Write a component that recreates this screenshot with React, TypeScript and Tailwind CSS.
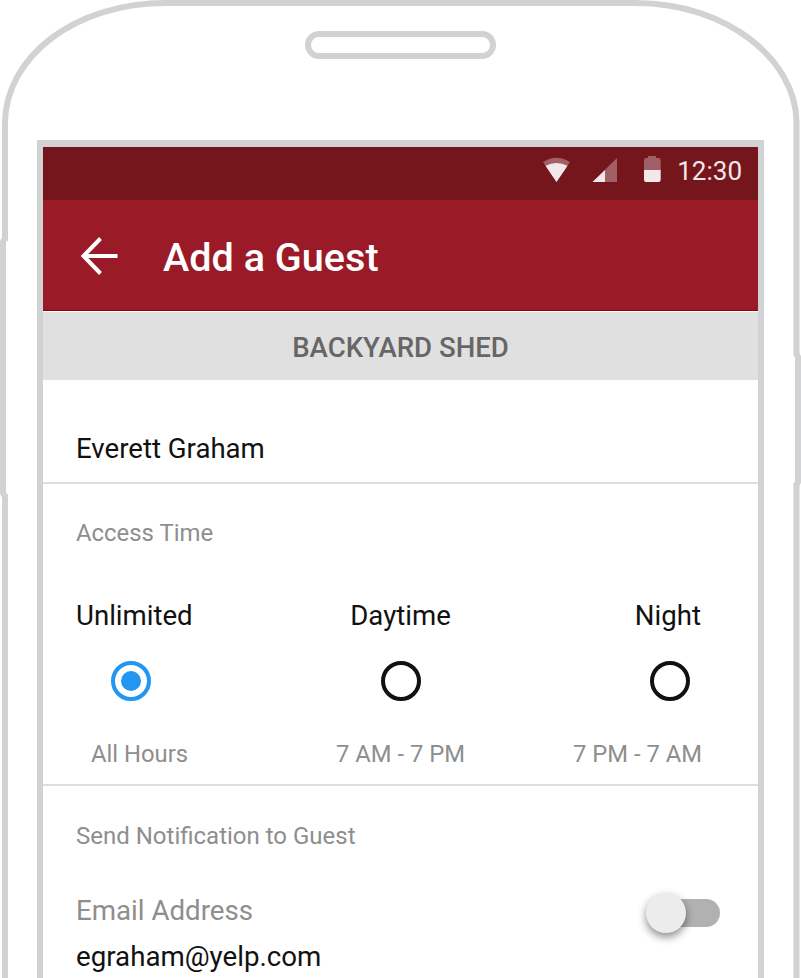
import React from "react";

function PhoneOutline() {
  return (
    <svg
      className="pointer-events-none absolute inset-0"
      width="801"
      height="978"
      viewBox="0 0 801 978"
      fill="none"
      stroke="#d1d2d4"
      strokeWidth="6"
      aria-hidden="true"
    >
      <path d="M5 241V122C6 58 73 3 166 3H636C727 3 796 60 796.5 122V356" />
      <path d="M5 494V990" />
      <path d="M796.5 483V990" />
      <path d="M5 238L3 242V493L5 497" />
      <path d="M796 353L798 357V482L796 486" />
    </svg>
  );
}

function StatusIcons() {
  return (
    <svg className="mr-4 block" width="120" height="30" viewBox="542 155 120 30" aria-hidden="true">
      <path d="M543 162Q556.500 153.500 570 162L556.500 182Z" fill="#a15f66" />
      <path d="M545.500 165.700Q556.500 160.500 567.500 165.700L556.500 182Z" fill="#f2e8e9" />
      <path d="M617 158V182H592.500Z" fill="#a15f66" />
      <path d="M605 170V182H592.500Z" fill="#f2e8e9" />
      <path d="M648 156H656V158H658.500Q660.700 158 660.700 160.200V170H644V160.200Q644 158 646 158H648Z" fill="#a15f66" />
      <path d="M644 170H660.700V180Q660.700 182 658.500 182H646Q644 182 644 180Z" fill="#f2e8e9" />
    </svg>
  );
}

function Radio({ checked = false }: { checked?: boolean }) {
  return (
    <span
      className={
        checked
          ? "flex h-10 w-10 items-center justify-center rounded-full border-4 border-[#2196f3]"
          : "flex h-10 w-10 items-center justify-center rounded-full border-4 border-[#111111]"
      }
    >
      {checked && <span className="h-5 w-5 rounded-full bg-[#2196f3]" />}
    </span>
  );
}

export default function App() {
  return (
    <div className="relative flex h-[978px] w-[801px] flex-col overflow-hidden bg-white font-['Roboto',sans-serif]">
      <PhoneOutline />
      <div className="flex h-[140px] shrink-0 justify-center pt-[31px]">
        <div className="h-7 w-[191px] rounded-full border-[6px] border-[#d1d2d4]" />
      </div>

      <main className="mr-[37px] ml-[37px] flex flex-1 flex-col border-x-[6px] border-t-[7px] border-[#d1d2d4]">
        <div className="flex h-[53px] shrink-0 items-start justify-end bg-[#75151c] pt-2 pr-4">
          <StatusIcons />
          <span className="-ml-px text-[26px] leading-[32px] text-[#f2e8e9]">12:30</span>
        </div>

        <header className="flex h-[111px] shrink-0 items-center border-b border-[#8f000f] bg-[#9a1b27] pl-9">
          <svg className="block" width="40" height="40" viewBox="0 0 40 40" fill="none" stroke="#fff" strokeWidth="4" aria-hidden="true">
            <path d="M38.500 21H5M21.500 3.500L4.500 21L21.500 38.500" />
          </svg>
          <h1 className="ml-11 pt-[5px] text-[39.6px] leading-[48px] font-medium text-white">Add a Guest</h1>
        </header>

        <div className="mt-px flex h-[68px] shrink-0 items-center justify-center bg-[#e0e0e0] pt-[3px] text-[27.6px] leading-8 font-medium text-[#666666]">
          BACKYARD SHED
        </div>

        <section className="h-[104px] shrink-0 border-b-2 border-[#dedede] pt-[53px] pl-[33px] text-[27.6px] leading-8 text-[#111111]">
          Everett Graham
        </section>

        <section className="flex h-[302px] shrink-0 flex-col border-b-2 border-[#dedede] pt-[33px] pr-[33px] pl-[33px]">
          <h2 className="text-[23.9px] leading-8 text-[#8e8e8e]">Access Time</h2>
          <div className="mt-[51px] grid grid-cols-3 text-[27.6px] leading-8 text-[#111111]">
            <span>Unlimited</span>
            <span className="text-center">Daytime</span>
            <span className="pr-6 text-right">Night</span>
          </div>
          <div className="mt-[29px] grid grid-cols-3 px-[35px]">
            <Radio checked />
            <span className="justify-self-center"><Radio /></span>
            <span className="justify-self-end"><Radio /></span>
          </div>
          <div className="mt-[37px] grid grid-cols-3 text-[23.8px] leading-8 text-[#8e8e8e]">
            <span className="pl-[15px]">All Hours</span>
            <span className="text-center">7 AM - 7 PM</span>
            <span className="pr-[23px] text-right">7 PM - 7 AM</span>
          </div>
        </section>

        <section className="flex flex-col pt-[34px] pr-[38px] pl-[33px]">
          <h2 className="text-[24px] leading-8 text-[#8e8e8e]">Send Notification to Guest</h2>
          <div className="mt-[43px] flex justify-between">
            <div className="text-[27.7px]">
              <div className="leading-8 text-[#8e8e8e]">Email Address</div>
              <div className="mt-[14px] leading-8 text-[#111111]">egraham@yelp.com</div>
            </div>
            <div className="mt-1 flex h-7 w-[73px] items-center rounded-full bg-[#b1b1b1]">
              <span className="-ml-px h-10 w-10 rounded-full bg-[#ececec] shadow-[0_4px_8px_rgba(0,0,0,0.45)]" />
            </div>
          </div>
        </section>
      </main>
    </div>
  );
}
